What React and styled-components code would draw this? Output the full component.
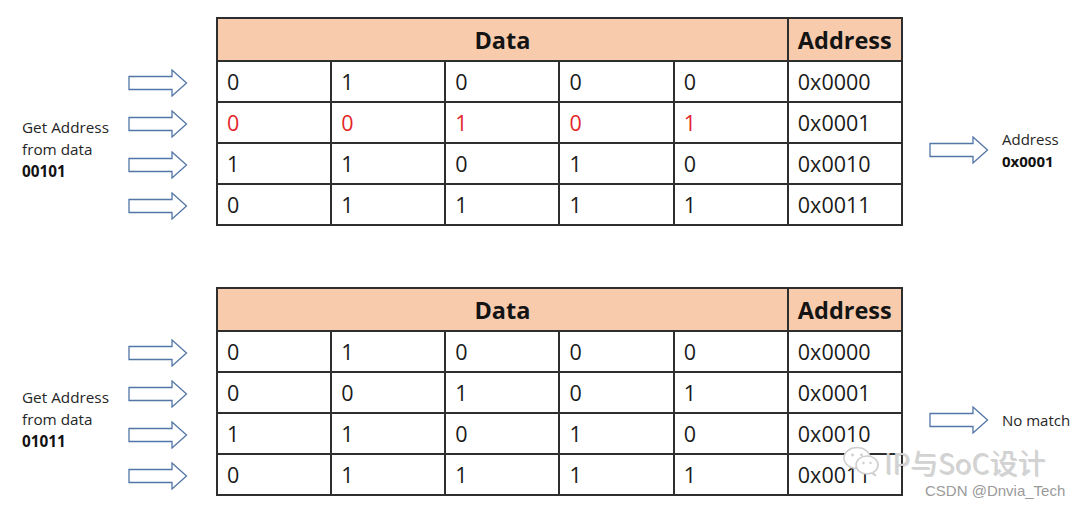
import React from "react";
import styled, { createGlobalStyle } from "styled-components";

const GlobalStyle = createGlobalStyle`
  body {
    margin: 0;
    background: #ffffff;
    font-family: "Open Sans", "Liberation Sans", sans-serif;
    color: #1a1a1a;
  }
`;

const sections = [
  {
    key: "00101",
    rows: [
      { bits: "01000", addr: "0x0000" },
      { bits: "00101", addr: "0x0001", hit: true },
      { bits: "11010", addr: "0x0010" },
      { bits: "01111", addr: "0x0011" },
    ],
    result: ["Address", "0x0001"],
  },
  {
    key: "01011",
    rows: [
      { bits: "01000", addr: "0x0000" },
      { bits: "00101", addr: "0x0001" },
      { bits: "11010", addr: "0x0010" },
      { bits: "01111", addr: "0x0011" },
    ],
    result: ["No match"],
  },
];

const Arrow = () => (
  <svg width="60" height="28" viewBox="0 0 60 28">
    <polygon
      points="1,7.5 44,7.5 44,1 58.5,14 44,27 44,20.5 1,20.5"
      fill="#ffffff"
      stroke="#5276a6"
      strokeWidth="1.3"
      strokeLinejoin="miter"
    />
  </svg>
);

const WeChat = () => (
  <svg width="40" height="32" viewBox="0 0 40 32">
    <ellipse cx="15" cy="12" rx="13" ry="10.5" fill="#ffffff" stroke="#cfcfcf" strokeWidth="1.6" />
    <circle cx="10.5" cy="9" r="1.4" fill="#cfcfcf" />
    <circle cx="19.5" cy="9" r="1.4" fill="#cfcfcf" />
    <ellipse cx="25" cy="19" rx="11" ry="9" fill="#ffffff" stroke="#cfcfcf" strokeWidth="1.6" />
    <circle cx="21.5" cy="17" r="1.2" fill="#cfcfcf" />
    <circle cx="28.5" cy="17" r="1.2" fill="#cfcfcf" />
    <path d="M31 26.5 L34 30 L29.5 27.5" fill="#ffffff" stroke="#cfcfcf" strokeWidth="1.4" />
  </svg>
);

export default function App() {
  return (
    <>
      <GlobalStyle />
      <Page>
        {sections.map((s, i) => (
          <Section key={i} $top={i === 0 ? 17 : 61}>
            <Label>
              Get Address
              <br />
              from data
              <br />
              <b>{s.key}</b>
            </Label>
            <ArrowCol>
              {s.rows.map((r, j) => (
                <ArrowCell key={j}>
                  <Arrow />
                </ArrowCell>
              ))}
            </ArrowCol>
            <Table>
              <HeadCell $span={5} $center>
                Data
              </HeadCell>
              <HeadCell>Address</HeadCell>
              {s.rows.map((r, j) => (
                <React.Fragment key={j}>
                  {r.bits.split("").map((b, k) => (
                    <Cell key={k} $red={r.hit}>
                      {b}
                    </Cell>
                  ))}
                  <Cell>{r.addr}</Cell>
                </React.Fragment>
              ))}
            </Table>
            <Result>
              <Arrow />
              <ResultText>
                {s.result.length === 1 ? (
                  s.result[0]
                ) : (
                  <>
                    {s.result[0]}
                    <br />
                    <b>{s.result[1]}</b>
                  </>
                )}
              </ResultText>
            </Result>
          </Section>
        ))}
        <Watermark>
          <WeChat />
          <span>IP与SoC设计</span>
        </Watermark>
        <Credit>CSDN @Dnvia_Tech</Credit>
      </Page>
    </>
  );
}

const Page = styled.div`
  position: relative;
  width: 1080px;
  height: 509px;
  overflow: hidden;
`;

const Section = styled.div`
  display: flex;
  align-items: flex-start;
  padding-top: ${(p) => p.$top}px;
`;

const Label = styled.div`
  width: 106px;
  padding-left: 22px;
  padding-top: 99px;
  font-size: 15.3px;
  line-height: 22px;
  color: #262626;
  white-space: nowrap;
  b {
    font-weight: 700;
    color: #111;
  }
`;

const ArrowCol = styled.div`
  width: 60px;
  padding-top: 45px;
  display: flex;
  flex-direction: column;
`;

const ArrowCell = styled.div`
  height: 41px;
  display: flex;
  align-items: center;
`;

const Table = styled.div`
  margin-left: 28px;
  width: 687px;
  box-sizing: border-box;
  display: grid;
  grid-template-columns: repeat(6, 1fr);
  grid-template-rows: 41px repeat(4, 39px);
  gap: 2px;
  padding: 2px;
  background: #2e2e2e;
`;

const HeadCell = styled.div`
  grid-column: span ${(p) => p.$span || 1};
  background: #f8cbad;
  display: flex;
  align-items: center;
  justify-content: ${(p) => (p.$center ? "center" : "flex-start")};
  padding-left: ${(p) => (p.$center ? 0 : 9)}px;
  font-size: 23.5px;
  font-weight: 700;
  color: #141414;
`;

const Cell = styled.div`
  background: #ffffff;
  display: flex;
  align-items: center;
  padding-left: 9px;
  font-size: 21.5px;
  color: ${(p) => (p.$red ? "#e3262a" : "#1a1a1a")};
`;

const Result = styled.div`
  margin-left: 26px;
  margin-top: 111px;
  height: 44px;
  display: flex;
  align-items: center;
  gap: 13px;
`;

const ResultText = styled.div`
  font-size: 15px;
  line-height: 22px;
  color: #262626;
  white-space: nowrap;
  b {
    font-weight: 700;
    color: #111;
  }
`;

const Watermark = styled.div`
  position: absolute;
  left: 842px;
  top: 442px;
  display: flex;
  align-items: center;
  gap: 2px;
  font-family: "Noto Sans CJK SC", "Noto Sans", sans-serif;
  font-size: 28px;
  color: #d2d2d2;
  text-shadow: 1px 1px 0 rgba(0, 0, 0, 0.18);
`;

const Credit = styled.div`
  position: absolute;
  left: 925px;
  top: 482px;
  font-family: "Liberation Sans", sans-serif;
  font-size: 15px;
  color: #9a9a9a;
`;
